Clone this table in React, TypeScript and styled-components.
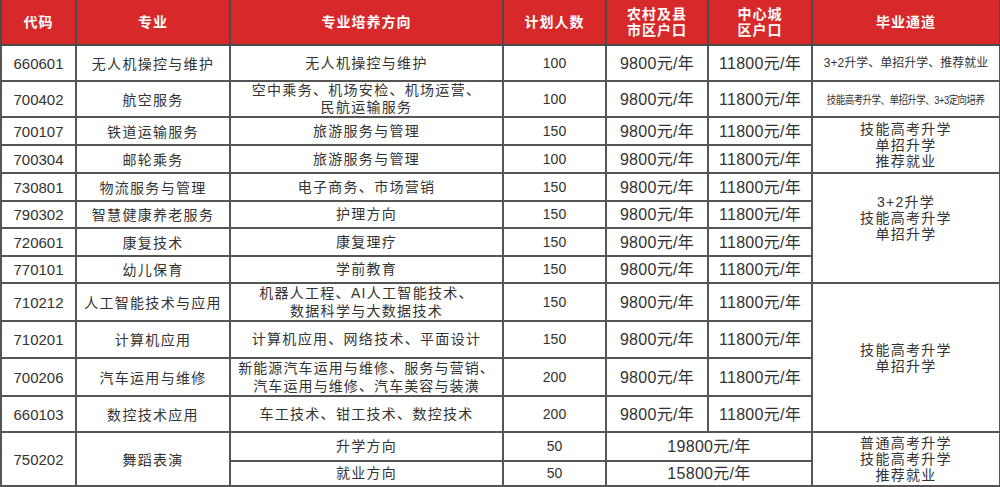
import React from "react";
import styled, { createGlobalStyle } from "styled-components";

const GlobalStyle = createGlobalStyle`
  html, body { margin: 0; padding: 0; background: #ffffff; }
  body { font-family: "Liberation Sans", "Noto Sans CJK SC", sans-serif; }
`;

const Table = styled.table`
  width: 999px;
  border-collapse: collapse;
  table-layout: fixed;
  border: 2px solid #4a4a4a;
  border-top: none;
  color: #333333;
  font-family: "Liberation Sans", "Noto Sans CJK SC", sans-serif;
`;

const HeadRow = styled.tr`
  height: 45px;
  background: #d8292a;
`;

const Head = styled.th`
  border-left: 2px solid #4a4a4a;
  border-right: 2px solid #4a4a4a;
  border-bottom: 2px solid #4a4a4a;
  color: #ffffff;
  font-weight: 700;
  font-size: 14px;
  line-height: 16px;
  letter-spacing: 1px;
  padding: 0;
  text-align: center;
  vertical-align: middle;
  font-family: "Liberation Sans", "Noto Sans CJK SC", sans-serif;
`;

const Row = styled.tr<{ $h: number }>`
  height: ${(p) => p.$h}px;
`;

const Cell = styled.td<{ $size?: number; $ls?: number; $lh?: number; $pb?: number; $cjk?: boolean }>`
  border: 2px solid #555555;
  padding: 0 0 ${(p) => p.$pb ?? 0}px 0;
  text-align: center;
  vertical-align: middle;
  white-space: nowrap;
  font-size: ${(p) => p.$size ?? 14}px;
  letter-spacing: ${(p) => p.$ls ?? 1.3}px;
  line-height: ${(p) => p.$lh ?? 17}px;
  font-family: ${(p) =>
    p.$cjk ? `"Noto Sans CJK SC", sans-serif` : `"Liberation Sans", "Noto Sans CJK SC", sans-serif`};
`;

const Code = styled(Cell).attrs({ $size: 15, $ls: 0 })``;
const Major = styled(Cell).attrs({ $cjk: true })``;
const Direction = styled(Cell)``;
const Count = styled(Cell).attrs({ $size: 14, $ls: 0 })``;
const Price = styled(Cell).attrs({ $size: 16, $ls: 0.3 })``;
const Path = styled(Cell).attrs({ $lh: 16 })``;

const Narrow = styled.span`
  display: inline-block;
  font-size: 11px;
  letter-spacing: -0.6px;
  transform: scaleX(0.86);
`;

const PRICE_A = "9800元/年";
const PRICE_B = "11800元/年";

export default function App() {
  return (
    <>
      <GlobalStyle />
      <Table>
        <colgroup>
          <col style={{ width: 75 }} />
          <col style={{ width: 154 }} />
          <col style={{ width: 273 }} />
          <col style={{ width: 103 }} />
          <col style={{ width: 102 }} />
          <col style={{ width: 104 }} />
          <col style={{ width: 188 }} />
        </colgroup>
        <thead>
          <HeadRow>
            <Head>代码</Head>
            <Head>专业</Head>
            <Head>专业培养方向</Head>
            <Head>计划人数</Head>
            <Head>
              农村及县
              <br />
              市区户口
            </Head>
            <Head>
              中心城
              <br />
              区户口
            </Head>
            <Head>毕业通道</Head>
          </HeadRow>
        </thead>
        <tbody>
          <Row $h={36}>
            <Code>660601</Code>
            <Major>无人机操控与维护</Major>
            <Direction>无人机操控与维护</Direction>
            <Count>100</Count>
            <Price>{PRICE_A}</Price>
            <Price>{PRICE_B}</Price>
            <Path $size={12} $ls={0}>3+2升学、单招升学、推荐就业</Path>
          </Row>
          <Row $h={36}>
            <Code>700402</Code>
            <Major>航空服务</Major>
            <Direction>
              空中乘务、机场安检、机场运营、
              <br />
              民航运输服务
            </Direction>
            <Count>100</Count>
            <Price>{PRICE_A}</Price>
            <Price>{PRICE_B}</Price>
            <Path $ls={0}>
              <Narrow>技能高考升学、单招升学、3+3定向培养</Narrow>
            </Path>
          </Row>
          <Row $h={28}>
            <Code>700107</Code>
            <Major>铁道运输服务</Major>
            <Direction>旅游服务与管理</Direction>
            <Count>150</Count>
            <Price>{PRICE_A}</Price>
            <Price>{PRICE_B}</Price>
            <Path rowSpan={2}>
              技能高考升学
              <br />
              单招升学
              <br />
              推荐就业
            </Path>
          </Row>
          <Row $h={28}>
            <Code>700304</Code>
            <Major>邮轮乘务</Major>
            <Direction>旅游服务与管理</Direction>
            <Count>100</Count>
            <Price>{PRICE_A}</Price>
            <Price>{PRICE_B}</Price>
          </Row>
          <Row $h={28}>
            <Code>730801</Code>
            <Major>物流服务与管理</Major>
            <Direction>电子商务、市场营销</Direction>
            <Count>150</Count>
            <Price>{PRICE_A}</Price>
            <Price>{PRICE_B}</Price>
            <Path rowSpan={4} $pb={20}>
              3+2升学
              <br />
              技能高考升学
              <br />
              单招升学
            </Path>
          </Row>
          <Row $h={27}>
            <Code>790302</Code>
            <Major>智慧健康养老服务</Major>
            <Direction>护理方向</Direction>
            <Count>150</Count>
            <Price>{PRICE_A}</Price>
            <Price>{PRICE_B}</Price>
          </Row>
          <Row $h={28}>
            <Code>720601</Code>
            <Major>康复技术</Major>
            <Direction>康复理疗</Direction>
            <Count>150</Count>
            <Price>{PRICE_A}</Price>
            <Price>{PRICE_B}</Price>
          </Row>
          <Row $h={27}>
            <Code>770101</Code>
            <Major>幼儿保育</Major>
            <Direction>学前教育</Direction>
            <Count>150</Count>
            <Price>{PRICE_A}</Price>
            <Price>{PRICE_B}</Price>
          </Row>
          <Row $h={37}>
            <Code>710212</Code>
            <Major>人工智能技术与应用</Major>
            <Direction $lh={18}>
              机器人工程、AI人工智能技术、
              <br />
              数据科学与大数据技术
            </Direction>
            <Count>150</Count>
            <Price>{PRICE_A}</Price>
            <Price>{PRICE_B}</Price>
            <Path rowSpan={4}>
              技能高考升学
              <br />
              单招升学
            </Path>
          </Row>
          <Row $h={37}>
            <Code>710201</Code>
            <Major>计算机应用</Major>
            <Direction>计算机应用、网络技术、平面设计</Direction>
            <Count>150</Count>
            <Price>{PRICE_A}</Price>
            <Price>{PRICE_B}</Price>
          </Row>
          <Row $h={36}>
            <Code>700206</Code>
            <Major>汽车运用与维修</Major>
            <Direction $ls={1.1} $lh={18}>
              新能源汽车运用与维修、服务与营销、
              <br />
              汽车运用与维修、汽车美容与装潢
            </Direction>
            <Count>200</Count>
            <Price>{PRICE_A}</Price>
            <Price>{PRICE_B}</Price>
          </Row>
          <Row $h={36}>
            <Code>660103</Code>
            <Major>数控技术应用</Major>
            <Direction>车工技术、钳工技术、数控技术</Direction>
            <Count>200</Count>
            <Price>{PRICE_A}</Price>
            <Price>{PRICE_B}</Price>
          </Row>
          <Row $h={29}>
            <Code rowSpan={2}>750202</Code>
            <Major rowSpan={2}>舞蹈表演</Major>
            <Direction>升学方向</Direction>
            <Count>50</Count>
            <Price colSpan={2}>19800元/年</Price>
            <Path rowSpan={2}>
              普通高考升学
              <br />
              技能高考升学
              <br />
              推荐就业
            </Path>
          </Row>
          <Row $h={25}>
            <Direction>就业方向</Direction>
            <Count>50</Count>
            <Price colSpan={2}>15800元/年</Price>
          </Row>
        </tbody>
      </Table>
    </>
  );
}
